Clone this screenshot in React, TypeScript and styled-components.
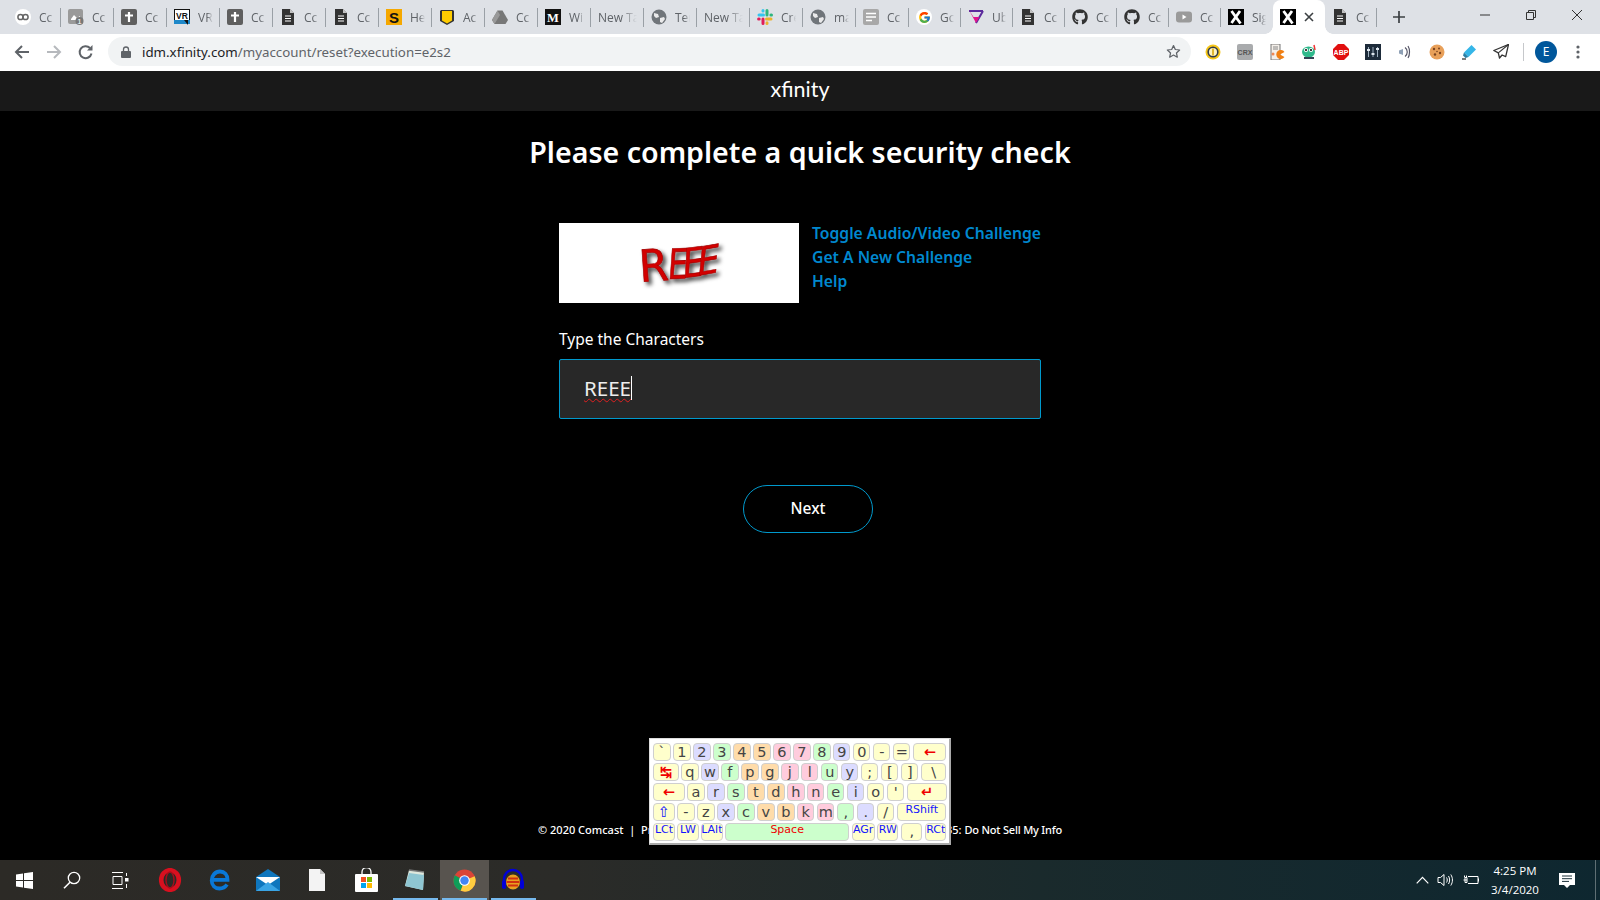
import React from "react";
import styled, { createGlobalStyle } from "styled-components";
import { FaGithub } from "react-icons/fa";
import { FcGoogle } from "react-icons/fc";

const Global = createGlobalStyle`
  html, body { margin: 0; padding: 0; background: #000; overflow: hidden; }
  * { box-sizing: border-box; }
`;

const Page = styled.div`
  width: 1600px; height: 900px; display: flex; flex-direction: column; position: relative;
  font-family: "Noto Sans", "Open Sans", sans-serif; background: #000;
`;
const TabStrip = styled.div`
  height: 34px; background: #dee1e6; display: flex; align-items: stretch; padding-left: 8px; flex: none;
`;
const Tab = styled.div<{ $active?: boolean; $sep?: boolean; $late?: boolean }>`
  position: relative; flex: none; width: ${p => (p.$late ? "52px" : "53px")}; display: flex; align-items: center;
  padding: 0 7px; gap: 8px; font: 12px "Open Sans", sans-serif; color: #5f6368;
  background: ${p => (p.$active ? "#fff" : "transparent")};
  border-radius: ${p => (p.$active ? "8px 8px 0 0" : "0")};
  &::after {
    content: ""; position: absolute; right: 0; top: 8px; height: 19px; width: 1px;
    background: ${p => (p.$sep ? "#9aa0a6" : "transparent")};
  }
  &::before {
    content: ${p => (p.$active ? '""' : "none")}; position: absolute; left: -8px; right: -8px; bottom: 0; height: 8px;
    background:
      radial-gradient(circle at 0 0, transparent 7.5px, #fff 8px) left bottom / 8px 8px no-repeat,
      radial-gradient(circle at 100% 0, transparent 7.5px, #fff 8px) right bottom / 8px 8px no-repeat;
  }
`;
const FavSlot = styled.span`
  width: 16px; height: 16px; flex: none; display: flex; align-items: center; justify-content: center;
  & > svg { display: block; }
`;
const TabTitle = styled.span`
  flex: 1; min-width: 0; overflow: hidden; white-space: nowrap;
  -webkit-mask-image: linear-gradient(90deg, #000 60%, transparent);
  mask-image: linear-gradient(90deg, #000 60%, transparent);
`;
const TabClose = styled.span`
  flex: none; width: 10px; height: 10px; display: flex;
`;
const NewTab = styled.div`
  width: 44px; display: flex; align-items: center; justify-content: center; flex: none;
`;
const Spring = styled.div`flex: 1;`;
const WinControls = styled.div`
  display: flex; align-items: flex-start; padding-right: 0; flex: none;
`;
const WinBtn = styled.div`
  width: 46px; height: 29px; display: flex; align-items: center; justify-content: center;
`;

const Toolbar = styled.div`
  height: 37px; background: #fff; display: flex; align-items: center; padding: 0 6px 2px 6px; flex: none;
`;
const NavBtn = styled.div`
  width: 32px; height: 32px; flex: none; display: flex; align-items: center; justify-content: center;
`;
const Omnibox = styled.div`
  flex: 1; height: 29px; margin: 0 6px; border-radius: 15px; background: #f1f3f4;
  display: flex; align-items: center; padding: 0 10px 0 13px; min-width: 0;
`;
const Url = styled.div`
  margin-left: 11px; font: 13.3px "Noto Sans", sans-serif; color: #5f6368; flex: 1; white-space: nowrap;
`;
const Host = styled.span`color: #202124;`;
const ToolSep = styled.div`width: 1px; height: 18px; background: #c6c8cb; margin: 0 6px; flex: none;`;
const Avatar = styled.div`
  width: 22px; height: 22px; border-radius: 50%; background: #00579b; color: #fff;
  font: 12px "Noto Sans", sans-serif; display: flex; align-items: center; justify-content: center;
`;

const SiteHeader = styled.header`
  height: 40px; background: #191919; flex: none; display: flex; align-items: center; justify-content: center;
`;
const Logo = styled.div`
  font: 400 21.5px/1 "Lato", sans-serif; color: #fff; margin-top: -2px;
`;
const Main = styled.main`
  flex: 1; display: flex; flex-direction: column; align-items: center; min-height: 0;
`;
const Title = styled.h1`
  margin: 21px 0 0; font: 600 28.6px/40px "Noto Sans", sans-serif; color: #fff; text-align: center;
`;
const Form = styled.div`
  width: 482px; margin-top: 51px; display: flex; flex-direction: column;
`;
const Challenge = styled.div`display: flex; gap: 13px;`;
const CaptchaBox = styled.div`
  width: 240px; height: 80px; background: #fff; flex: none;
  & > svg { display: block; }
`;
const Links = styled.div`display: flex; flex-direction: column; margin-top: -2px;`;
const LinkItem = styled.a`
  font: 600 15.7px/24px "Noto Sans", sans-serif; color: #0088cf; white-space: nowrap;
`;
const Label = styled.div`
  margin: 24px 0 8px; font: 400 15.5px/24px "Noto Sans", sans-serif; color: #fff;
`;
const InputBox = styled.div`
  height: 60px; background: #282828; border: 1px solid #0099cc; border-radius: 2px;
  display: flex; align-items: center; padding: 0 24px 2px; font: 20.5px "Noto Sans", sans-serif; color: #eee;
`;
const Typed = styled.span`
  text-decoration: underline wavy #e02020 1px; text-underline-offset: 2px; text-decoration-skip-ink: none;
  border-right: 1px solid #fff; line-height: 24px;
`;
const NextButton = styled.button`
  margin: 66px 0 0 184px; width: 130px; height: 48px; border-radius: 24px; background: transparent;
  border: 1px solid #0099cc; color: #fff; font: 500 15.5px "Noto Sans", sans-serif; padding: 0 0 2px;
`;
const Footer = styled.footer`
  flex: none; padding-bottom: 22px; text-align: center; font: 500 11px/16px "Noto Sans", sans-serif; color: #fff;
  white-space: pre;
`;
const FooterTail = styled.span`letter-spacing: -0.2px;`;

const Keyboard = styled.div`
  position: absolute; left: 649px; top: 738px; width: 302px; height: 107px; background: #fff;
  border: 1px solid #ddd; border-right: 2px solid #aaa; border-bottom: 2px solid #aaa;
  padding: 4.4px 3.6px 0 3.3px; display: flex; flex-direction: column; gap: 2.67px;
  font-family: "DejaVu Sans", sans-serif;
`;
const KeyRow = styled.div`display: flex; gap: 2.67px; height: 17.33px;`;
const COLORS: Record<string, string> = { c: "#ffffcc", b: "#dcdcff", g: "#ccffcc", o: "#ffdcaa", p: "#ffccdd" };
const Key = styled.div<{ $c: string; $w: number; $ink: string; $small?: boolean }>`
  width: ${p => p.$w}px; flex: none; height: 100%; border-radius: 4px; background: ${p => COLORS[p.$c]};
  border: 1px solid #cfcfcf; color: ${p => p.$ink}; display: flex; justify-content: center;
  align-items: ${p => (p.$small ? "flex-start" : "center")};
  font-size: ${p => (p.$small ? "11px" : "14.5px")}; line-height: ${p => (p.$small ? "12px" : "15px")}; white-space: nowrap; overflow: hidden;
  font-weight: ${p => (!p.$small && p.$ink === "#f00000" ? 700 : 400)};
`;

const Taskbar = styled.div`
  height: 40px; flex: none; position: relative; display: flex; align-items: stretch;
  background: linear-gradient(90deg, #2c2a26 0%, #2b2b28 35%, #1a2a2c 65%, #0e2730 100%);
`;
const SysBtn = styled.div`
  width: 48px; flex: none; display: flex; align-items: center; justify-content: center;
`;
const AppGroup = styled.div`display: flex; align-items: stretch; margin-left: 1.5px;`;
const TaskBtn = styled.div<{ $active?: boolean; $open?: boolean }>`
  width: 49px; flex: none; position: relative; display: flex; align-items: center; justify-content: center;
  background: ${p => (p.$active ? "#58544f" : "transparent")};
  &::after {
    content: ""; position: absolute; left: 2px; right: 2px; bottom: 0; height: 2px;
    background: ${p => (p.$open ? "#76b9ed" : "transparent")};
  }
`;
const TrayItem = styled.div<{ $w: number }>`
  width: ${p => p.$w}px; flex: none; display: flex; align-items: center; justify-content: center;
`;
const Clock = styled.div`
  width: 60px; margin: 0 7px 0 2px; flex: none; display: flex; flex-direction: column; align-items: center; justify-content: center;
  font: 11.5px/19px "Open Sans", sans-serif; color: #fff; white-space: nowrap;
`;
const ShowDesktop = styled.div`width: 5px; flex: none; border-left: 1px solid #5f6f74;`;

/* ---------- favicons ---------- */
const Sv: React.FC<{ s?: number; v?: string; children: React.ReactNode }> = ({ s = 16, v = "0 0 16 16", children }) => (
  <svg width={s} height={s} viewBox={v}>{children}</svg>
);
const Doc = ({ c = "#333" }: { c?: string }) => (
  <Sv>
    <path d="M2 0h8l4 4v12H2z" fill={c} />
    <path d="M10 0l4 4h-4z" fill="#fff" opacity=".7" />
    <path d="M5 7h6M5 9.5h6M5 12h6" stroke="#fff" strokeWidth="1" />
  </Sv>
);
const Globe = () => (
  <Sv>
    <circle cx="8" cy="8" r="7.5" fill="#70757a" />
    <path d="M3 4l4 1 1 3-3 1-2-2zM9 9l4-1 1 2-3 4-2-1z" fill="#fff" opacity=".85" />
  </Sv>
);
const Favicon: React.FC<{ k: string }> = ({ k }) => {
  switch (k) {
    case "cc":
      return <Sv><circle cx="8" cy="8" r="8" fill="#fff" /><circle cx="5.5" cy="8" r="2.6" fill="none" stroke="#666" strokeWidth="1.5" /><circle cx="10.5" cy="8" r="2.6" fill="none" stroke="#666" strokeWidth="1.5" /></Sv>;
    case "img":
      return <Sv><rect width="15" height="15" rx="2" fill="#9a9a9a" /><path d="M3 10l3-4 3 3 3-2v4H3z" fill="#fff" /><circle cx="11.5" cy="12" r="4" fill="#777" /><text x="11.5" y="15" fontSize="8" fill="#fff" textAnchor="middle" fontFamily="Liberation Sans">1</text></Sv>;
    case "cross":
      return <Sv><rect width="16" height="16" rx="2" fill="#5f5f5f" /><path d="M8 3v10M4 6.5h8" stroke="#fff" strokeWidth="2.2" /></Sv>;
    case "vr":
      return <Sv><rect width="16" height="12" fill="#111" /><rect x="1" y="1" width="14" height="10" fill="#fff" /><rect y="11" width="16" height="4" fill="#1e88c9" /><path d="M10 11h4v5z" fill="#111" /><text x="8" y="9.5" fontSize="8.5" fontWeight="700" textAnchor="middle" fontFamily="Liberation Sans" fill="#111">VR</text></Sv>;
    case "doc": return <Doc />;
    case "s":
      return <Sv><rect width="16" height="16" fill="#f5a800" /><text x="8" y="13.5" fontSize="15" fontWeight="700" textAnchor="middle" fontFamily="Liberation Sans" fill="#111">S</text></Sv>;
    case "shield":
      return <Sv><path d="M2 1h12l1 1v10l-7 4-7-4V2z" fill="#333" /><path d="M3 2h10v9.5L8 14.6 3 11.5z" fill="#fc0" /></Sv>;
    case "drive":
      return <Sv><path d="M5.5 1.5h5L16 11l-2.5 4h-11L0 11z" fill="#777" /><path d="M5.5 1.5L0 11l2.5 4L8 6z" fill="#999" /></Sv>;
    case "m":
      return <Sv><rect width="16" height="16" fill="#111" /><text x="8" y="12.5" fontSize="12.5" fontWeight="700" textAnchor="middle" fontFamily="Liberation Serif" fill="#fff">M</text></Sv>;
    case "globe": return <Globe />;
    case "slack":
      return <Sv>
        <g strokeWidth="3" strokeLinecap="round" fill="none">
          <path d="M2 6h4.5M6 1.5v.6" stroke="#36c5f0" />
          <path d="M10 1.6v4.5M14.5 6h-.6" stroke="#2eb67d" />
          <path d="M14 10H9.5M10 14.4v-.6" stroke="#ecb22e" />
          <path d="M6 14.4V10M1.6 10h.6" stroke="#e01e5a" />
        </g>
      </Sv>;
    case "lines":
      return <Sv><rect width="16" height="16" rx="2" fill="#a8a8a8" /><path d="M3 4.5h10M3 8h10M3 11.5h6" stroke="#fff" strokeWidth="1.6" /></Sv>;
    case "g":
      return <Sv><circle cx="8" cy="8" r="8" fill="#fff" /><foreignObject x="1.5" y="1.5" width="13" height="13"><FcGoogle size={13} style={{ display: "block" }} /></foreignObject></Sv>;
    case "ub":
      return <Sv><path d="M1 2h14M15 2L8 14" stroke="#5b2a9d" strokeWidth="2" fill="none" /><path d="M1 1l7 13 3.5-6H5.5z" fill="#e0138c" /></Sv>;
    case "gh": return <FaGithub size={16} color="#333" />;
    case "yt":
      return <Sv><rect y="2.5" width="16" height="11" rx="3" fill="#9a9a9a" /><path d="M6.5 5.5l4 2.5-4 2.5z" fill="#fff" /></Sv>;
    case "x":
      return <Sv><rect width="16" height="16" fill="#000" /><path d="M3.5 2l9 12.5M12 2L3.5 14" stroke="#fff" strokeWidth="2.8" /></Sv>;
    default: return null;
  }
};

const tabs: [string, string][] = [
  ["cc", "Cc"], ["img", "Cc"], ["cross", "Cc"], ["vr", "VR"], ["cross", "Cc"], ["doc", "Cc"], ["doc", "Cc"], ["s", "He"], ["shield", "Ac"], ["drive", "Cc"],
  ["m", "Wi"], ["", "New Ta"], ["globe", "Ter"], ["", "New Ta"], ["slack", "Cre"], ["globe", "ma"], ["lines", "Cc"], ["g", "Gc"], ["ub", "Ub"], ["doc", "Cc"],
  ["gh", "Cc"], ["gh", "Cc"], ["yt", "Cc"], ["x", "Sig"], ["x", ""], ["doc", "Cc"],
];

/* ---------- extension icons ---------- */
const Ext: React.FC<{ k: number }> = ({ k }) => {
  switch (k) {
    case 0:
      return <Sv><circle cx="8" cy="8" r="7.5" fill="#f5c518" /><circle cx="8" cy="8" r="5.6" fill="#2f3a4a" /><circle cx="8" cy="8" r="4" fill="#fff3c0" /><path d="M8 4.5v7" stroke="#d4a000" strokeWidth="1.5" /></Sv>;
    case 1:
      return <Sv><rect width="16" height="16" rx="2" fill="#a9abad" /><text x="8" y="11" fontSize="7" fontWeight="700" textAnchor="middle" fontFamily="Liberation Sans" fill="#555">CRX</text></Sv>;
    case 2:
      return <Sv><path d="M2 0h9v16H2z" fill="#f4efe9" stroke="#777" /><path d="M4 3h5M4 5h5" stroke="#888" /><circle cx="4" cy="10" r="1.5" fill="#e85" /><path d="M15.5 8a4.5 4.5 0 1 0 0 5L11 10.5z" fill="#f07f13" /></Sv>;
    case 3:
      return <Sv><ellipse cx="7.5" cy="8" rx="6.5" ry="5.5" fill="#2fb98c" /><circle cx="5" cy="6" r="2" fill="#fff" /><circle cx="10" cy="6" r="2" fill="#fff" /><circle cx="5" cy="6" r="1" fill="#000" /><circle cx="10" cy="6" r="1" fill="#000" /><path d="M3 14h10" stroke="#345" strokeWidth="2" /><path d="M13 1l1 5" stroke="#e33" strokeWidth="1.5" /></Sv>;
    case 4:
      return <Sv><path d="M5 0h6l5 5v6l-5 5H5l-5-5V5z" fill="#e10f0f" /><text x="8" y="10.7" fontSize="7" fontWeight="700" textAnchor="middle" fontFamily="Liberation Sans" fill="#fff">ABP</text></Sv>;
    case 5:
      return <Sv><rect width="16" height="16" fill="#1d2b3a" /><path d="M3.5 3v10M8 3v10M12.5 3v10" stroke="#9fb0bf" strokeWidth="1" /><path d="M2 6h3M6.5 10h3M11 5h3" stroke="#dfe7ee" strokeWidth="2" /></Sv>;
    case 6:
      return <Sv><path d="M2 6.5l4-1.5v6l-4-1.5z" fill="#8ea0b5" /><path d="M8 3.5c3 2 3 7 0 9M11 2c2 3 2 9 0 12" stroke="#556" fill="none" strokeWidth="1.2" /></Sv>;
    case 7:
      return <Sv><circle cx="8" cy="8" r="7.5" fill="#e8a05a" /><g fill="#7a4420"><circle cx="5" cy="5" r="1.2" /><circle cx="10" cy="4.5" r="1" /><circle cx="11" cy="9" r="1.2" /><circle cx="6" cy="10.5" r="1.2" /><circle cx="8" cy="7.5" r=".8" /></g></Sv>;
    case 8:
      return <Sv><path d="M10.5 1l4.5 4.5-7.5 7.5-4.5-4.5z" fill="#35b6e8" /><path d="M3 8.5l4.5 4.5-3 1-2.5-2.5z" fill="#2b7fa5" /><path d="M1 15h4" stroke="#444" strokeWidth="1.4" /></Sv>;
    default:
      return <Sv><path d="M15.5.5L.8 6.5l4.5 2.4L6.5 14l2.6-3 3.6 1.6z" fill="#fff" stroke="#333" strokeWidth="1.3" strokeLinejoin="round" /><path d="M15.5.5L5.3 8.9" stroke="#333" strokeWidth="1.1" /></Sv>;
  }
};

/* ---------- keyboard data ---------- */
type K = [string, string, number, string?, boolean?];
const INK = "#444";
const RED = "#f00000";
const BLUE = "#1414ff";
const single = (s: string, c: string): K[] => s.split("").map((ch, i) => [ch, c[i], 17.33]);
const kbRows: K[][] = [
  [...single("`1234567890-=", "ccbgooppgbccc"), ["←", "c", 33.3, RED]],
  [["↹", "c", 25.3, RED], ...single("qwfpgjluy;[]", "cbgooppgbccc"), ["\\", "c", 25.3]],
  [["←", "c", 31.3, RED], ...single("arstdhneio'", "cbgooppgbcc"), ["↵", "c", 40, RED]],
  [["⇧", "c", 21.3, BLUE], ...single("-zxcvbkm,./", "ccbgooppgbc"), ["RShift", "c", 49.3, BLUE, true]],
  [["LCt", "c", 21.3, BLUE, true], ["LW", "c", 21.3, BLUE, true], ["LAlt", "c", 21.3, BLUE, true], ["Space", "g", 124, RED, true], ["AGr", "c", 22.7, BLUE, true], ["RW", "c", 21.3, BLUE, true], [",", "c", 21.3], ["RCt", "c", 21.3, BLUE, true]],
];

const Captcha = () => (
  <svg width="240" height="80" viewBox="0 0 240 80">
    <defs>
      <filter id="sh" x="-20%" y="-30%" width="150%" height="170%">
        <feDropShadow dx="3" dy="3" stdDeviation="2.2" floodColor="#000" floodOpacity=".75" />
      </filter>
    </defs>
    <g filter="url(#sh)" fontFamily="DejaVu Sans, sans-serif" fontWeight="400" fill="#d20000" stroke="#a00000" strokeWidth="0.5">
      <text transform="translate(81 59) rotate(-4) scale(1.25 1.3)" fontSize="34">R</text>
      <text transform="translate(108 56) rotate(-2) skewX(-6) scale(1 1.3)" fontSize="32">E</text>
      <text transform="translate(123 55) rotate(-7) skewX(-10) scale(1.05 1.25)" fontSize="32">E</text>
      <text transform="translate(137 53) rotate(-10) skewX(-16) scale(1.1 1.2)" fontSize="32">E</text>
    </g>
  </svg>
);

const Stroke = { fill: "none", stroke: "#5f6368", strokeWidth: 2 };

export default function App() {
  return (
    <Page>
      <Global />
      <TabStrip>
        {tabs.map(([k, t], i) => {
          const active = i === 24;
          return (
            <Tab key={i} $active={active} $late={i >= 17} $sep={i !== 23 && i !== 24}>
              {k && <FavSlot><Favicon k={k} /></FavSlot>}
              {t && <TabTitle>{t}</TabTitle>}
              {active && (
                <TabClose>
                  <svg width="10" height="10" viewBox="0 0 10 10"><path d="M1 1l8 8M9 1l-8 8" stroke="#3c4043" strokeWidth="1.6" /></svg>
                </TabClose>
              )}
            </Tab>
          );
        })}
        <NewTab>
          <svg width="12" height="12" viewBox="0 0 12 12"><path d="M6 0v12M0 6h12" stroke="#3c4043" strokeWidth="1.7" /></svg>
        </NewTab>
        <Spring />
        <WinControls>
          <WinBtn><svg width="10" height="10" viewBox="0 0 10 10"><path d="M0 5h10" stroke="#333" /></svg></WinBtn>
          <WinBtn><svg width="10" height="10" viewBox="0 0 10 10"><path d="M.5 2.5h7v7h-7zM2.5 2.5v-2h7v7h-2" fill="none" stroke="#333" /></svg></WinBtn>
          <WinBtn><svg width="10" height="10" viewBox="0 0 10 10"><path d="M0 0l10 10M10 0L0 10" stroke="#333" /></svg></WinBtn>
        </WinControls>
      </TabStrip>

      <Toolbar>
        <NavBtn><svg width="16" height="16" viewBox="0 0 16 16"><path d="M15 8H2M8 2L2 8l6 6" {...Stroke} /></svg></NavBtn>
        <NavBtn><svg width="16" height="16" viewBox="0 0 16 16"><path d="M1 8h13M8 2l6 6-6 6" {...Stroke} stroke="#b6b9bd" /></svg></NavBtn>
        <NavBtn><svg width="16" height="16" viewBox="0 0 16 16"><path d="M13.5 9.5A6 6 0 1 1 12 4" {...Stroke} /><path d="M14.5 1v5.5H9z" fill="#5f6368" /></svg></NavBtn>
        <Omnibox>
          <svg width="10" height="12" viewBox="0 0 10 12"><path d="M2.5 5V3.5a2.5 2.5 0 0 1 5 0V5" fill="none" stroke="#5f6368" strokeWidth="1.3" /><rect y="5" width="10" height="7" rx="1" fill="#5f6368" /></svg>
          <Url><Host>idm.xfinity.com</Host>/myaccount/reset?execution=e2s2</Url>
          <svg width="15" height="15" viewBox="0 0 24 24"><path d="M12 2.5l2.9 6.3 6.9.8-5.1 4.7 1.4 6.8-6.1-3.4-6.1 3.4 1.4-6.8L2.2 9.6l6.9-.8z" fill="none" stroke="#5f6368" strokeWidth="2" strokeLinejoin="round" /></svg>
        </Omnibox>
        {[0, 1, 2, 3, 4, 5, 6, 7, 8, 9].map(k => <NavBtn key={k}><Ext k={k} /></NavBtn>)}
        <ToolSep />
        <NavBtn><Avatar>E</Avatar></NavBtn>
        <NavBtn><svg width="4" height="14" viewBox="0 0 4 14"><g fill="#5f6368"><circle cx="2" cy="2" r="1.6" /><circle cx="2" cy="7" r="1.6" /><circle cx="2" cy="12" r="1.6" /></g></svg></NavBtn>
      </Toolbar>

      <SiteHeader><Logo>xfinity</Logo></SiteHeader>

      <Main>
        <Title>Please complete a quick security check</Title>
        <Form>
          <Challenge>
            <CaptchaBox><Captcha /></CaptchaBox>
            <Links>
              <LinkItem>Toggle Audio/Video Challenge</LinkItem>
              <LinkItem>Get A New Challenge</LinkItem>
              <LinkItem>Help</LinkItem>
            </Links>
          </Challenge>
          <Label>Type the Characters</Label>
          <InputBox><Typed>REEE</Typed></InputBox>
          <NextButton>Next</NextButton>
        </Form>
      </Main>

      <Footer>{"© 2020 Comcast  |  Privacy Policy  |  Terms of Service  |  Cal. Civ. Code §1798.135: "}<FooterTail>Do Not Sell My Info</FooterTail></Footer>

      <Keyboard>
        {kbRows.map((row, r) => (
          <KeyRow key={r}>
            {row.map(([label, c, w, ink, small], i) => (
              <Key key={i} $c={c} $w={w} $ink={ink || INK} $small={small}>{label}</Key>
            ))}
          </KeyRow>
        ))}
      </Keyboard>

      <Taskbar>
        <SysBtn><svg width="17" height="17" viewBox="0 0 17 17"><path d="M0 2.4l7-1V8H0zM8 1.2L17 0v8H8zM0 9h7v6.6l-7-1zM8 9h9v8l-9-1.2z" fill="#fff" /></svg></SysBtn>
        <SysBtn><svg width="18" height="18" viewBox="0 0 18 18"><circle cx="11" cy="7" r="5.7" fill="none" stroke="#fff" strokeWidth="1.3" /><path d="M7 11.3L1 17.3" stroke="#fff" strokeWidth="1.6" /></svg></SysBtn>
        <SysBtn><svg width="17" height="17" viewBox="0 0 17 17"><path d="M0 .5h11M0 16.5h11M1 4.5h9v8H1z" fill="none" stroke="#fff" /><rect x="13" y="6" width="3.5" height="3.5" fill="#fff" /><path d="M14.5 1v3M14.5 12v4" stroke="#fff" /></svg></SysBtn>
        <AppGroup>
          <TaskBtn><svg width="24" height="24" viewBox="0 0 24 24"><ellipse cx="12" cy="12" rx="8.8" ry="9.8" fill="none" stroke="#d8101f" strokeWidth="4.6" /><ellipse cx="12" cy="12" rx="4" ry="8" fill="none" stroke="#a80d1a" strokeWidth="1.4" /></svg></TaskBtn>
          <TaskBtn><svg width="22" height="22" viewBox="0 0 22 22"><path d="M19 15.5c-2 3-4.5 4-7.5 4-4.5 0-7.8-3.2-7.8-8 0-5 3.6-9 8.3-9 4.5 0 7.5 3.3 7.5 8.3H5.5" fill="none" stroke="#0a78d7" strokeWidth="3.8" /></svg></TaskBtn>
          <TaskBtn><svg width="24" height="24" viewBox="0 0 24 24"><path d="M0 9L12 1l12 8v14H0z" fill="#0f76bd" /><path d="M0 9h24L12 17z" fill="#fff" /><path d="M0 23l12-9 12 9z" fill="#3aa4e4" /></svg></TaskBtn>
          <TaskBtn><svg width="16" height="22" viewBox="0 0 16 22"><path d="M0 0h11l5 5v17H0z" fill="#f3f3f3" /><path d="M11 0l5 5h-5z" fill="#c4c4c4" /></svg></TaskBtn>
          <TaskBtn><svg width="23" height="24" viewBox="0 0 23 24"><path d="M7 7V4a4.5 4.5 0 0 1 9 0v3" fill="none" stroke="#fff" strokeWidth="1.3" /><rect y="6" width="23" height="18" rx="1" fill="#fff" /><rect x="6" y="9" width="5" height="5" fill="#f25022" /><rect x="12" y="9" width="5" height="5" fill="#7fba00" /><rect x="6" y="15" width="5" height="5" fill="#00a4ef" /><rect x="12" y="15" width="5" height="5" fill="#ffb900" /></svg></TaskBtn>
          <TaskBtn $open><svg width="24" height="24" viewBox="0 0 24 24"><path d="M6 2l15 2-1 18L2 18z" fill="#dfe8dd" /><path d="M6 5l15 2-1 15L2 18z" fill="#8fc6d2" /><path d="M6 2l15 2" stroke="#777" strokeWidth="1.5" /></svg></TaskBtn>
          <TaskBtn $active $open><svg width="23" height="23" viewBox="0 0 24 24"><circle cx="12" cy="12" r="11.5" fill="#db4437" /><path d="M12 12L1.9 6.5A11.5 11.5 0 0 0 8 22.8z" fill="#0f9d58" /><path d="M12 12l10.6-4.5A11.5 11.5 0 0 1 8 22.8z" fill="#ffcd40" /><circle cx="12" cy="12" r="5.6" fill="#fff" /><circle cx="12" cy="12" r="4.4" fill="#4285f4" /></svg></TaskBtn>
          <TaskBtn $open><svg width="24" height="24" viewBox="0 0 24 24"><path d="M3 15V11a9 9 0 0 1 18 0v4" fill="none" stroke="#0000d8" strokeWidth="2.4" /><rect x="1" y="12" width="4" height="9" rx="2" fill="#0000d8" /><rect x="19" y="12" width="4" height="9" rx="2" fill="#0000d8" /><ellipse cx="12" cy="14" rx="7" ry="7.5" fill="#e8a020" /><path d="M5.5 14h13M7 10.5h10M7 17.5h10" stroke="#d03010" strokeWidth="2" /></svg></TaskBtn>
        </AppGroup>
        <Spring />
        <TrayItem $w={24}><svg width="13" height="8" viewBox="0 0 13 8"><path d="M.7 7.3l5.8-6 5.8 6" fill="none" stroke="#fff" strokeWidth="1.2" /></svg></TrayItem>
        <TrayItem $w={24}><svg width="18" height="14" viewBox="0 0 18 14"><path d="M1 4.5h2.5L7 1.5v11l-3.5-3H1z" fill="none" stroke="#fff" /><path d="M9.5 4.5c1 1.5 1 3.5 0 5M11.5 3c1.5 2.5 1.5 5.5 0 8M13.8 1.5c2.2 3.5 2.2 7.5 0 11" fill="none" stroke="#fff" /></svg></TrayItem>
        <TrayItem $w={25}><svg width="16" height="12" viewBox="0 0 16 12"><path d="M.5 6H4M4 3.5h-2v5h2zM1.5 1.5v2M3.5 1.5v2" stroke="#fff" fill="none" /><path d="M5 2.5h10v7H5M15.5 4.5v3" stroke="#fff" fill="none" /></svg></TrayItem>
        <Clock><span>4:25 PM</span><span>3/4/2020</span></Clock>
        <TrayItem $w={30}><svg width="16" height="15" viewBox="0 0 16 15"><path d="M0 0h16v12h-5l-3 3-3-3H0z" fill="#fff" /><path d="M3 3h10M3 5.7h10M3 8.4h7" stroke="#1a3038" /></svg></TrayItem>
        <TrayItem $w={13} />
        <ShowDesktop />
      </Taskbar>
    </Page>
  );
}
